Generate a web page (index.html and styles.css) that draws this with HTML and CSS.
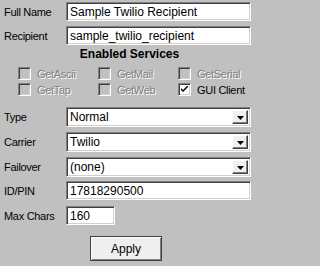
FILE: index.html
```html
<!DOCTYPE html>
<html>
<head>
<meta charset="utf-8">
<link rel="stylesheet" href="styles.css">
</head>
<body>
<div class="form">
  <div class="row r-name">
    <span class="lbl">Full Name</span>
    <div class="field wide"><span class="val">Sample Twilio Recipient</span></div>
  </div>
  <div class="row r-recip">
    <span class="lbl">Recipient</span>
    <div class="field wide"><span class="val">sample_twilio_recipient</span></div>
  </div>
  <div class="heading">Enabled Services</div>
  <div class="checks">
    <div class="chk disabled"><span class="box"></span><span class="ctext">GetAscii</span></div>
    <div class="chk disabled"><span class="box"></span><span class="ctext">GetMail</span></div>
    <div class="chk disabled"><span class="box"></span><span class="ctext">GetSerial</span></div>
    <div class="chk disabled"><span class="box"></span><span class="ctext">GetTap</span></div>
    <div class="chk disabled"><span class="box"></span><span class="ctext">GetWeb</span></div>
    <div class="chk"><span class="box on"><svg width="7" height="7" viewBox="0 0 7 7"><path d="M0 2 L0 4 L2 6 L7 1 L7 -1 L2 4 Z" fill="#000"/></svg></span><span class="ctext">GUI Client</span></div>
  </div>
  <div class="row r-sel1">
    <span class="lbl">Type</span>
    <div class="field wide sel"><span class="val">Normal</span><span class="dd"><svg width="7" height="4" viewBox="0 0 7 4"><path d="M0 0 H7 L3.5 4 Z" fill="#000"/></svg></span></div>
  </div>
  <div class="row r-sel">
    <span class="lbl">Carrier</span>
    <div class="field wide sel"><span class="val">Twilio</span><span class="dd"><svg width="7" height="4" viewBox="0 0 7 4"><path d="M0 0 H7 L3.5 4 Z" fill="#000"/></svg></span></div>
  </div>
  <div class="row r-sel">
    <span class="lbl">Failover</span>
    <div class="field wide sel"><span class="val">(none)</span><span class="dd"><svg width="7" height="4" viewBox="0 0 7 4"><path d="M0 0 H7 L3.5 4 Z" fill="#000"/></svg></span></div>
  </div>
  <div class="row r-id">
    <span class="lbl">ID/PIN</span>
    <div class="field wide"><span class="val">17818290500</span></div>
  </div>
  <div class="row r-max">
    <span class="lbl">Max Chars</span>
    <div class="field short"><span class="val">160</span></div>
  </div>
  <div class="actions">
    <button class="apply">Apply</button>
  </div>
</div>
</body>
</html>
```

FILE: styles.css
```css
html, body {
  margin: 0;
  padding: 0;
  background: #c0c0c0;
  width: 259px;
  height: 266px;
  overflow: hidden;
}
.form {
  display: flex;
  flex-direction: column;
  padding: 2px 0 0 4px;
  font-family: "Liberation Sans", Arial, sans-serif;
  font-size: 11px;
  color: #000;
}
.row {
  display: flex;
  align-items: center;
  height: 19px;
}
.r-recip { margin-top: 5px; }
.r-sel1 { margin-top: 11px; height: 20px; }
.r-sel { margin-top: 5px; height: 20px; }
.r-id { margin-top: 4px; }
.r-max { margin-top: 6px; }
.lbl {
  width: 62px;
  flex: none;
  letter-spacing: -0.3px;
}
.field {
  box-sizing: border-box;
  height: 100%;
  background: #fff;
  border-top: 1px solid #808080;
  border-left: 1px solid #808080;
  border-bottom: 1px solid #fff;
  border-right: 1px solid #fff;
  box-shadow: inset 1px 1px 0 #404040, inset -1px -1px 0 #d4d0c8;
  display: flex;
  align-items: center;
  padding-left: 3px;
  font-size: 12px;
}
.wide { width: 185px; }
.short { width: 49px; }
.val { white-space: nowrap; }
.sel { position: relative; }
.dd {
  margin-left: auto;
  margin-right: 2px;
  box-sizing: border-box;
  width: 16px;
  height: 14px;
  background: #f0f0f0;
  border-top: 1px solid #fff;
  border-left: 1px solid #fff;
  border-bottom: 1px solid #404040;
  border-right: 1px solid #404040;
  box-shadow: inset -1px -1px 0 #808080;
  display: flex;
  align-items: center;
  justify-content: center;
}
.dd svg { display: block; margin-top: 1px; }
.heading {
  margin-top: 2px;
  text-align: center;
  font-weight: bold;
  font-size: 12px;
  line-height: 14px;
  padding-right: 4px;
}
.checks {
  margin-top: 6px;
  display: grid;
  grid-template-columns: 80px 80px 80px;
  row-gap: 3px;
  padding-left: 14px;
}
.chk {
  display: flex;
  align-items: center;
  height: 13px;
}
.box {
  box-sizing: border-box;
  width: 13px;
  height: 13px;
  flex: none;
  background: #c0c0c0;
  border-top: 1px solid #808080;
  border-left: 1px solid #808080;
  border-bottom: 1px solid #fff;
  border-right: 1px solid #fff;
  box-shadow: inset 1px 1px 0 #404040, inset -1px -1px 0 #d4d0c8;
  display: flex;
  align-items: center;
  justify-content: center;
}
.box.on { background: #fff; }
.box svg { display: block; }
.ctext {
  margin-left: 6px;
  white-space: nowrap;
  letter-spacing: -0.3px;
}
.disabled .ctext {
  color: #808080;
  text-shadow: 1px 1px 0 #fff;
}
.actions {
  margin-top: 11px;
  display: flex;
  padding-left: 86px;
}
.apply {
  box-sizing: border-box;
  width: 72px;
  height: 25px;
  margin: 0;
  padding: 0;
  background: #efefef;
  border: 1px solid #404040;
  box-shadow: inset 1px 1px 0 #fff, inset -1px -1px 0 #808080;
  font-family: "Liberation Sans", Arial, sans-serif;
  font-size: 12px;
  color: #000;
}
```
